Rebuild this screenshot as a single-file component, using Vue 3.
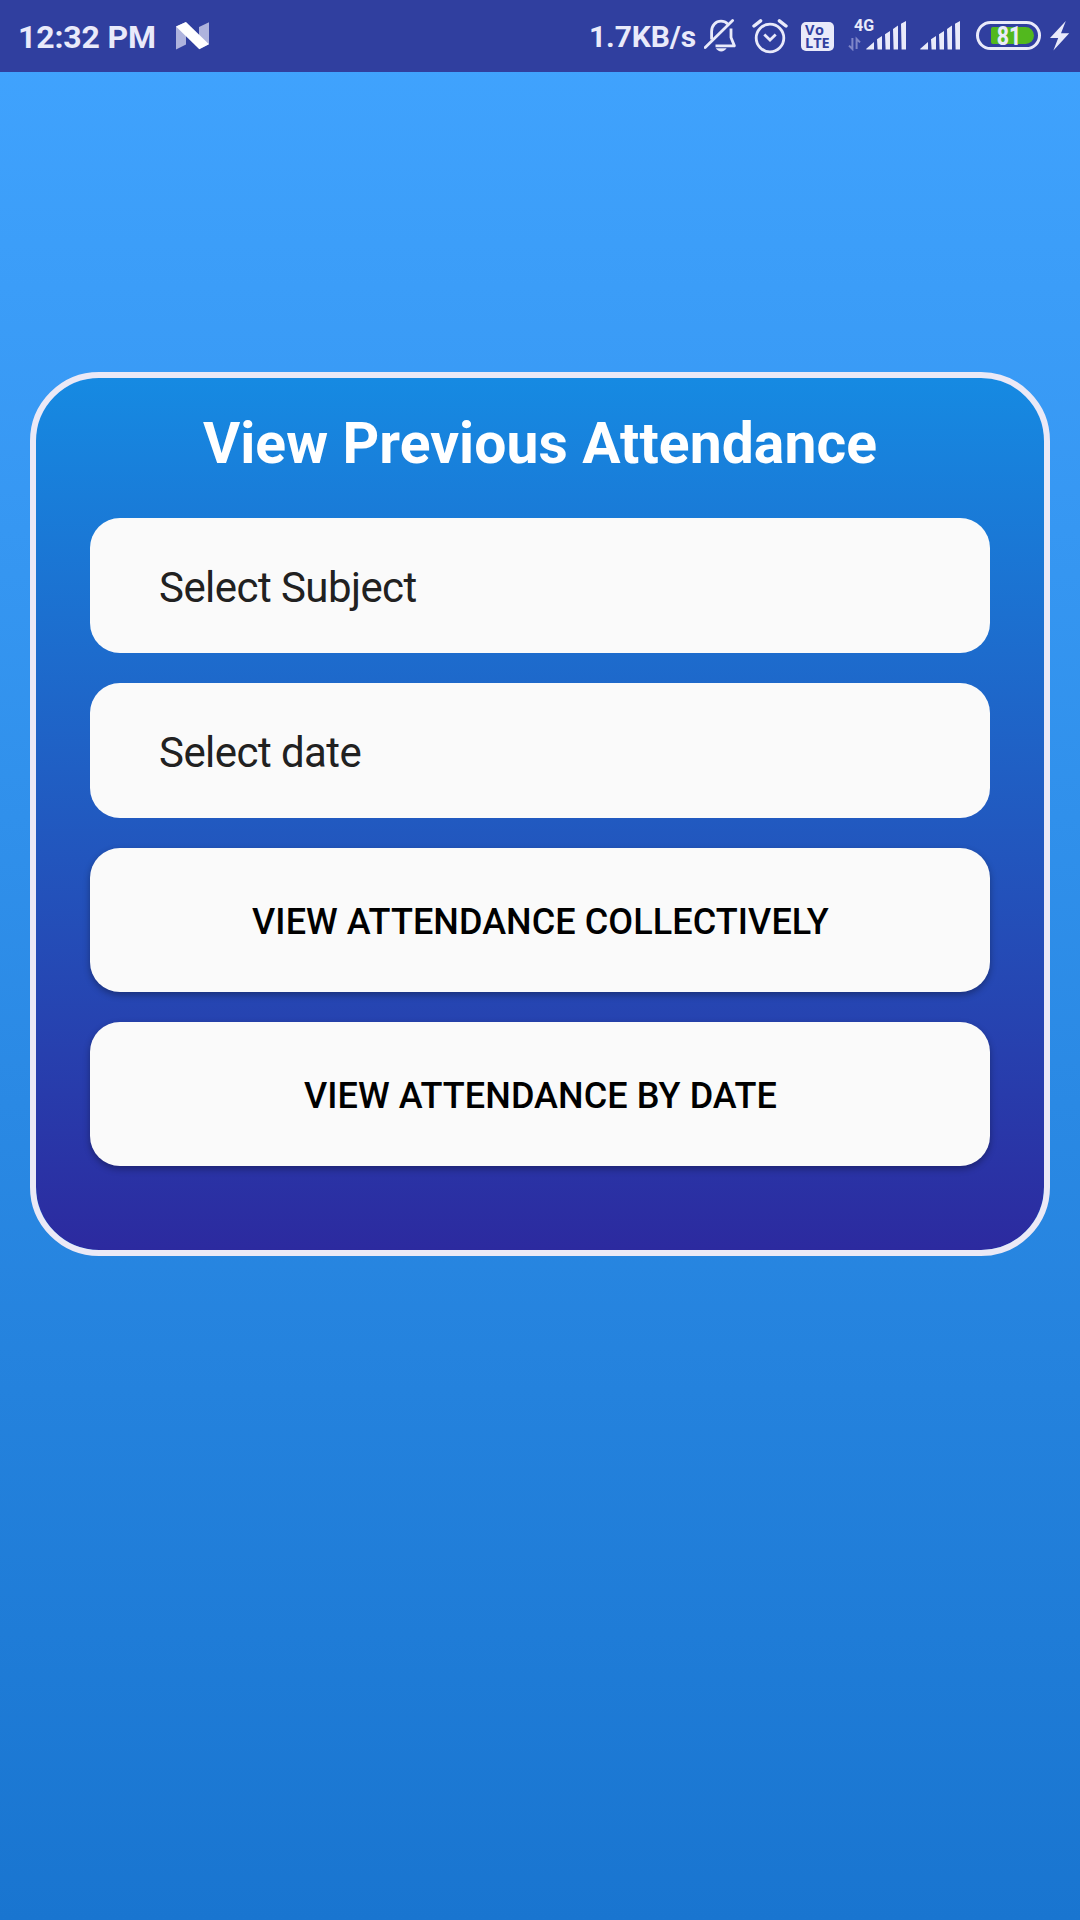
<script setup>
import { ref } from 'vue'

const fields = ref(['Select Subject', 'Select date'])
const actions = ref([
  { label: 'View attendance collectively', kind: 'all' },
  { label: 'View attendance by date', kind: 'date' },
])
</script>

<template>
  <div class="screen">
    <header class="status">
      <span class="clock">12:32 PM</span>
      <svg class="nougat" width="34" height="28" viewBox="0 0 34 28">
        <path d="M0 4.5 L10 0 V22.5 L0 27.5Z M23 5 L33 .3 V22 L23 27Z" fill="#aeb3dd" />
        <path d="M0 4.5 L10 0 L33 22.3 L23.3 27.3Z" fill="#fff" />
      </svg>
      <span class="speed">1.7KB/s</span>
      <svg class="bell" width="34" height="34" viewBox="0 0 34 34" fill="none" stroke="#e9eafa" stroke-width="2.8">
        <path d="M7.6 20.6 V12.6 C7.6 6 12 2.2 17 2.2 C19.6 2.2 22 3.2 23.7 4.9" />
        <path d="M27 9.5 V18.5 L30.4 26.9 H11.5" stroke-linejoin="round" />
        <path d="M1.2 28.6 L28.6 1.6" stroke-linecap="round" />
        <path d="M11.8 29.2 H22.6 C21.4 31.2 19.4 32.4 17.2 32.4 C15 32.4 13 31.2 11.8 29.2Z" fill="#e9eafa" stroke="none" />
      </svg>
      <svg class="alarm" width="36" height="35" viewBox="0 0 36 35" fill="none" stroke="#e9eafa" stroke-width="2.8">
        <circle cx="18" cy="19" r="13.8" />
        <path d="M12.3 15.5 L18 21 L23.7 15.5" stroke-width="2.8" />
        <path d="M2 7 L8.6 1.8 M34 7 L27.4 1.8" stroke-width="3.4" stroke-linecap="round" />
      </svg>
      <div class="volte"><span class="vo">Vo</span><span class="lte">LTE</span></div>
      <div class="cell">
        <span class="net">4G</span>
        <svg width="59" height="30" viewBox="0 0 59 30" fill="#e9eafa">
          <path d="M4.4 17 V28 L1 24.6 M8.6 28 V18 L12 21.4" fill="none" stroke="#7f86c8" stroke-width="2" />
          <path d="M18 28 L26 21 V28.4 H18.6Z M29 18.3 L34 15 V28.4 H29.6Z M37 13.3 L42 10 V28.4 H37.6Z M45 8 L50 4.6 V28.4 H45.6Z M53 2.8 L58 0 V28.4 H53.6Z" />
        </svg>
      </div>
      <svg class="sim" width="41" height="30" viewBox="17 0 41 30" fill="#e9eafa">
        <path d="M18 28 L26 21 V28.4 H18.6Z M29 18.3 L34 15 V28.4 H29.6Z M37 13.3 L42 10 V28.4 H37.6Z M45 8 L50 4.6 V28.4 H45.6Z M53 2.8 L58 0 V28.4 H53.6Z" />
      </svg>
      <div class="battery"><i class="level"></i><span class="percent">81</span></div>
      <svg class="bolt" width="20" height="30" viewBox="0 0 20 30">
        <path d="M15.8 0 L0 17 H8.2 L3.4 29.6 L19.2 12.3 H11Z" fill="#e9eafa" />
      </svg>
    </header>

    <main class="card">
      <h1 class="title">View Previous Attendance</h1>
      <div v-for="f in fields" :key="f" class="field">{{ f }}</div>
      <button v-for="a in actions" :key="a.kind" class="action" type="button">{{ a.label }}</button>
    </main>
  </div>
</template>

<style>
body { margin: 0; }
</style>

<style scoped>
.screen {
  width: 1080px;
  height: 1920px;
  overflow: hidden;
  box-sizing: border-box;
  font-family: Roboto, "Liberation Sans", sans-serif;
  background: linear-gradient(180deg, #41a4ff 0%, #1975d0 100%);
}
.status {
  display: flex;
  align-items: flex-start;
  height: 72px;
  box-sizing: border-box;
  background: #303f9f;
  color: #e9eafa;
  white-space: nowrap;
}
.status svg { display: block; flex: none; }
.clock, .speed { font-weight: 700; line-height: 38px; flex: none; }
.clock { width: 158px; margin: 18px 0 0 18px; font-size: 32px; letter-spacing: -.15px; }
.nougat { margin-top: 22px; }
.speed { width: 115px; margin: 18px 0 0 379px; font-size: 30px; letter-spacing: -.12px; }
.bell { margin-top: 19px; }
.alarm { margin: 19px 0 0 14px; }
.volte {
  display: flex;
  flex-direction: column;
  align-items: flex-start;
  flex: none;
  width: 33px;
  height: 29px;
  margin: 22px 0 0 13px;
  box-sizing: border-box;
  padding: 1px 0 0 4px;
  border-radius: 5px;
  background: #e9eafa;
  color: #303f9f;
  font-weight: 700;
  font-size: 14.5px;
  line-height: 13px;
  font-family: "Open Sans", sans-serif;
}
.vo { letter-spacing: .5px; }
.cell { display: flex; flex-direction: column; width: 59px; flex: none; margin: 17px 0 0 14px; }
.net { font-weight: 700; font-size: 16px; line-height: 16px; margin: 1px 0 -13px 6px; }
.sim { margin: 21px 0 0 12px; }
.battery {
  position: relative;
  display: flex;
  align-items: center;
  justify-content: center;
  flex: none;
  width: 65px;
  height: 29px;
  margin: 21px 0 0 16px;
  box-sizing: border-box;
  border: 3px solid #e9eafa;
  border-radius: 15px;
}
.level { position: absolute; left: 12px; right: 4px; top: 3px; bottom: 3px; border-radius: 2px 9px 9px 2px; background: #52b81e; }
.percent { position: relative; font-weight: 800; font-size: 26px; line-height: 24px; transform: scaleX(.82); }
.bolt { margin: 21px 0 0 9px; }

.card {
  display: flex;
  flex-direction: column;
  gap: 30px;
  width: 1020px;
  height: 884px;
  margin: 300px auto 0;
  box-sizing: border-box;
  padding: 30px 54px 0;
  border: 6px solid #ebe9f6;
  border-radius: 69px;
  background: linear-gradient(180deg, #168ae2 0%, #2c2a9f 100%) padding-box;
}
.title {
  height: 80px;
  margin: 0;
  line-height: 72px;
  font-size: 57px;
  font-weight: 700;
  letter-spacing: .08px;
  text-align: center;
  white-space: nowrap;
  color: #fff;
}
.field {
  height: 135px;
  flex: none;
  box-sizing: border-box;
  padding-left: 69px;
  border-radius: 30px;
  background: #fafafa;
  color: #212121;
  font-size: 42px;
  letter-spacing: -.56px;
  line-height: 139px;
}
.action {
  height: 144px;
  flex: none;
  padding: 4px 0 0 1px;
  border: 0;
  border-radius: 30px;
  background: #fafafa;
  color: #000;
  font: 500 36px Roboto, "Liberation Sans", sans-serif;
  letter-spacing: .08px;
  text-transform: uppercase;
  box-shadow: 0 3px 7px rgba(0, 0, 0, .32);
}
</style>
